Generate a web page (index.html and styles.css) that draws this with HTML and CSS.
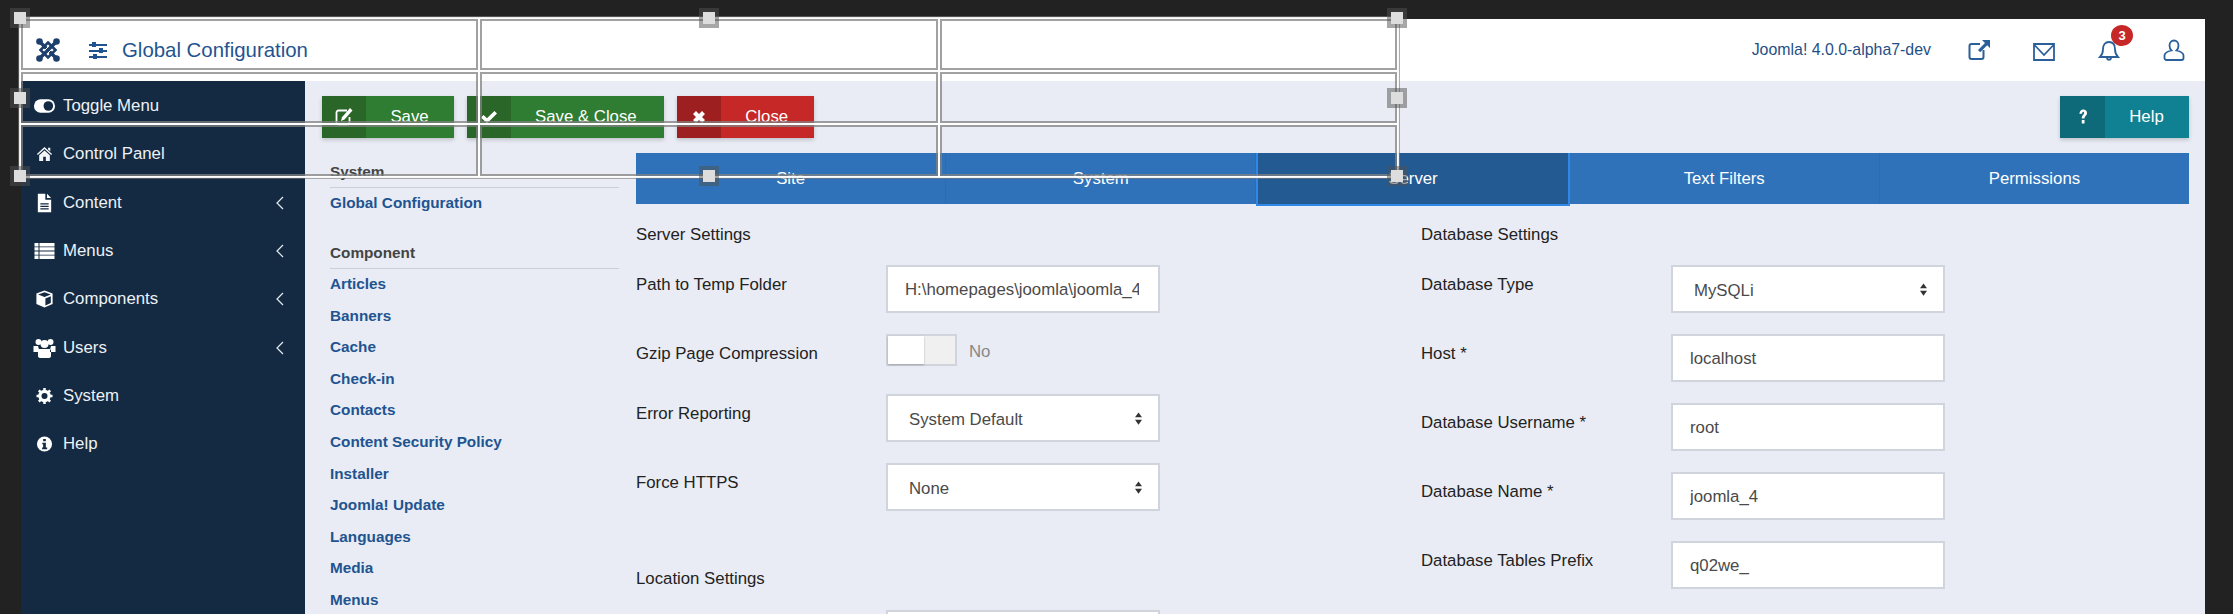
FILE: index.html
```html
<!DOCTYPE html>
<html lang="en">
<head>
<meta charset="utf-8">
<title>Global Configuration</title>
<link rel="stylesheet" href="styles.css">
</head>
<body>
<div class="app">
  <header class="topbar">
    <svg class="logo" viewBox="0 0 24 24"><g fill="none" stroke="#1c3f6c"><path d="M4 4L20 20M20 4L4 20" stroke-width="3.400"/><path d="M12 4.500L19.500 12 12 19.500 4.500 12z" stroke-width="2.600"/></g><path d="M9 12l3-3M12 15l3-3" stroke="#fff" stroke-width="1"/><g fill="#1c3f6c"><circle cx="3.500" cy="3.500" r="3.300"/><circle cx="20.500" cy="3.500" r="3.300"/><circle cx="3.500" cy="20.500" r="3.300"/><circle cx="20.500" cy="20.500" r="3.300"/></g></svg>
    <svg class="sliders" viewBox="0 0 18 17"><g stroke="#1f5490" stroke-width="2"><path d="M0 3h18M0 9h18M0 15h18"/></g><g fill="#1f5490"><rect x="3" y="0" width="4" height="5"/><rect x="10" y="6" width="4" height="5"/><rect x="4" y="12" width="4" height="5"/></g></svg>
    <h1 class="page-title">Global Configuration</h1>
    <span class="version">Joomla! 4.0.0-alpha7-dev</span>
    <svg class="top-icon" viewBox="0 0 22 22"><path d="M12 5H3.500A2 2 0 0 0 1.500 7v11a2 2 0 0 0 2 2h10a2 2 0 0 0 2-2v-7" fill="none" stroke="#2a5f9a" stroke-width="2"/><path d="M14 1h8v8l-2.800-2.800-7 7-2.200-2.200 7-7z" fill="#2a5f9a"/></svg>
    <svg class="top-icon" viewBox="0 0 22 22"><path d="M1 5h20v16H1zM1 5.500L11 16 21 5.500" fill="none" stroke="#2a5f9a" stroke-width="1.800"/></svg>
    <span class="bell">
      <svg class="top-icon" viewBox="0 0 22 22"><path d="M2 18c2-2 3-4 3-8 0-4 2-7 6-7s6 3 6 7c0 4 1 6 3 8zM9 18.500c0 3 4 3 4 0" fill="none" stroke="#2a5f9a" stroke-width="1.800"/></svg>
      <span class="badge">3</span>
    </span>
    <svg class="top-icon" viewBox="0 0 22 22"><path d="M6.500 6.500a4.500 5 0 1 1 9 0c0 2.500-1 4-2 5 4 1 7 2.500 7 5V19a2 2 0 0 1-2 2H3.500a2 2 0 0 1-2-2v-2.500c0-2.500 3-4 7-5-1-1-2-2.500-2-5z" fill="none" stroke="#2a5f9a" stroke-width="1.800"/></svg>
  </header>

  <div class="main">
    <nav class="sidebar">
      <a class="side-item"><svg class="side-icon" viewBox="0 0 24 16"><rect x="1" y="1" width="22" height="14" rx="7" fill="#fff"/><circle cx="16" cy="8" r="5" fill="#132a42"/></svg>Toggle Menu</a>
      <a class="side-item"><svg class="side-icon" viewBox="0 0 18 18"><path d="M9 1l8.500 8-1 1.200L9 3.500 1.500 10.200.500 9zM3 10.500L9 5l6 5.500V17h-4.500v-5h-3v5H3zM13 2h2.500v4L13 4z" fill="#f4f5f7"/></svg>Control Panel</a>
      <a class="side-item"><svg class="side-icon side-icon-tall" viewBox="0 0 18 24"><path d="M1 1h9v7h7v15H1zM12 1l5 5h-5z" fill="#fff"/><path d="M4 13h10M4 16h10M4 19h10" stroke="#132a42" stroke-width="1.500"/></svg>Content<svg class="chevron" viewBox="0 0 8 14"><path d="M7 1L1 7l6 6" fill="none" stroke="#e8ecf0" stroke-width="1.200"/></svg></a>
      <a class="side-item"><svg class="side-icon" viewBox="0 0 20 16"><path d="M0 0h20v3.400H0zM0 4.200h20v3.400H0zM0 8.400h20v3.400H0zM0 12.600h20V16H0z" fill="#fff"/><path d="M4.500 0v16" stroke="#132a42"/></svg>Menus<svg class="chevron" viewBox="0 0 8 14"><path d="M7 1L1 7l6 6" fill="none" stroke="#e8ecf0" stroke-width="1.200"/></svg></a>
      <a class="side-item"><svg class="side-icon side-icon-mid" viewBox="0 0 20 20"><path d="M10 .500l9 3.300v11.700L10 19.500 1 15.500V3.800z" fill="#fff"/><path d="M3 5l7 2.800L17 5l-7-2.600zM11 9.500v7.600l6-2.700V7z" fill="#132a42"/></svg>Components<svg class="chevron" viewBox="0 0 8 14"><path d="M7 1L1 7l6 6" fill="none" stroke="#e8ecf0" stroke-width="1.200"/></svg></a>
      <a class="side-item"><svg class="side-icon side-icon-tall" viewBox="0 0 22 20"><g fill="#fff"><circle cx="5" cy="4" r="3"/><circle cx="17" cy="4" r="3"/><circle cx="11" cy="6" r="4"/><path d="M0 8h4.500l1 3.500v2.500H0zM22 8h-4.500l-1 3.500v2.500H22zM6 11h10c1 0 1.500 1 1.500 2v5c0 1-1 2-2 2h-9c-1 0-2-1-2-2v-5c0-1 .5-2 1.500-2z"/></g></svg>Users<svg class="chevron" viewBox="0 0 8 14"><path d="M7 1L1 7l6 6" fill="none" stroke="#e8ecf0" stroke-width="1.200"/></svg></a>
      <a class="side-item"><svg class="side-icon" viewBox="0 0 18 18"><circle cx="9" cy="9" r="5.200" fill="none" stroke="#fff" stroke-width="3.600"/><path d="M9 0v18M0 9h18M2.600 2.600l12.800 12.800M15.400 2.600L2.600 15.400" stroke="#fff" stroke-width="2.800" stroke-dasharray="3 12 3"/></svg>System</a>
      <a class="side-item"><svg class="side-icon" viewBox="0 0 18 18"><circle cx="9" cy="9" r="8.500" fill="#fff"/><path d="M7.500 3.500h3v2.500h-3zM6.500 7.500h4V13H12v1.800H6.300V13h1.200V9.300h-1z" fill="#132a42"/></svg>Help</a>
    </nav>

    <div class="content">
      <div class="toolbar">
        <button class="btn btn-green"><span class="btn-icon"><svg viewBox="0 0 18 18"><path d="M12 2.500H3.500a2 2 0 0 0-2 2v10a2 2 0 0 0 2 2h9a2 2 0 0 0 2-2V9" fill="none" stroke="#fff" stroke-width="1.800"/><path d="M15 0l2.500 2.500-8 9L6 13l1-3.800z" fill="#fff"/></svg></span><span class="btn-label">Save</span></button>
        <button class="btn btn-green"><span class="btn-icon"><svg viewBox="0 0 18 18"><path d="M1 9.500l2.600-2.600 3.400 3.400L14.400 3 17 5.600 7 15.500z" fill="#fff"/></svg></span><span class="btn-label">Save &amp; Close</span></button>
        <button class="btn btn-red"><span class="btn-icon"><svg viewBox="0 0 18 18"><path d="M3 6l3-3 3 3 3-3 3 3-3 3 3 3-3 3-3-3-3 3-3-3 3-3z" fill="#fff"/></svg></span><span class="btn-label">Close</span></button>
        <button class="btn btn-teal"><span class="btn-icon"><svg viewBox="0 0 18 18"><path d="M5.500 6C5.500 3 7 1.500 9.300 1.500c2.300 0 3.700 1.500 3.700 3.500 0 2.800-2.500 3-2.500 5.500H7.800c0-3.500 2.300-3.700 2.300-5.500 0-.8-.3-1.200-.9-1.200-.7 0-1 .6-1 1.800zM7.800 12h2.700v3.500H7.800z" fill="#fff"/></svg></span><span class="btn-label">Help</span></button>
      </div>

      <div class="body-row">
        <aside class="subnav">
          <h3 class="sub-head">System</h3>
          <ul class="sub-list sub-list-first">
            <li>Global Configuration</li>
          </ul>
          <h3 class="sub-head sub-head-next">Component</h3>
          <ul class="sub-list sub-list-second">
            <li>Articles</li>
            <li>Banners</li>
            <li>Cache</li>
            <li>Check-in</li>
            <li>Contacts</li>
            <li>Content Security Policy</li>
            <li>Installer</li>
            <li>Joomla! Update</li>
            <li>Languages</li>
            <li>Media</li>
            <li>Menus</li>
          </ul>
        </aside>

        <section class="panel">
          <div class="tabs">
            <div class="tab">Site</div>
            <div class="tab">System</div>
            <div class="tab tab-active">Server</div>
            <div class="tab">Text Filters</div>
            <div class="tab">Permissions</div>
          </div>
          <div class="columns">
            <div class="col">
              <h4 class="section-title">Server Settings</h4>
              <div class="field"><label>Path to Temp Folder</label><input class="input" value="H:\homepages\joomla\joomla_4\tmp"></div>
              <div class="field field-switch"><label>Gzip Page Compression</label><div class="switch"><span class="switch-track"><span class="switch-knob"></span></span><span class="switch-text">No</span></div></div>
              <div class="field"><label>Error Reporting</label><div class="select-wrap"><select class="input select"><option>System Default</option></select><svg class="arrows" viewBox="0 0 8 14"><path d="M4 0l4 5.500H0zM4 14l4-5.500H0z"/></svg></div></div>
              <div class="field"><label>Force HTTPS</label><div class="select-wrap"><select class="input select"><option>None</option></select><svg class="arrows" viewBox="0 0 8 14"><path d="M4 0l4 5.500H0zM4 14l4-5.500H0z"/></svg></div></div>
              <h4 class="section-title section-next">Location Settings</h4>
              <div class="field"><label></label><input class="input" value=""></div>
            </div>
            <div class="col">
              <h4 class="section-title">Database Settings</h4>
              <div class="field"><label>Database Type</label><div class="select-wrap"><select class="input select"><option>MySQLi</option></select><svg class="arrows" viewBox="0 0 8 14"><path d="M4 0l4 5.500H0zM4 14l4-5.500H0z"/></svg></div></div>
              <div class="field"><label>Host *</label><input class="input" value="localhost"></div>
              <div class="field"><label>Database Username *</label><input class="input" value="root"></div>
              <div class="field"><label>Database Name *</label><input class="input" value="joomla_4"></div>
              <div class="field"><label>Database Tables Prefix</label><input class="input" value="q02we_"></div>
            </div>
          </div>
        </section>
      </div>
    </div>
  </div>
</div>

<div class="selection">
  <div class="sel-cell"></div><div class="sel-cell"></div><div class="sel-cell"></div>
  <div class="sel-cell"></div><div class="sel-cell"></div><div class="sel-cell"></div>
  <div class="sel-cell"></div><div class="sel-cell"></div><div class="sel-cell"></div>
  <span class="handle h-tl"></span><span class="handle h-tc"></span><span class="handle h-tr"></span>
  <span class="handle h-ml"></span><span class="handle h-mr"></span>
  <span class="handle h-bl"></span><span class="handle h-bc"></span><span class="handle h-br"></span>
</div>
</body>
</html>
```

FILE: styles.css
```css
* { box-sizing: border-box; }
html, body { height: 100%; margin: 0; overflow: hidden; }
body {
  background: #222;
  padding: 19px 28px 0 21px;
  position: relative;
  font-family: "Liberation Sans", Arial, sans-serif;
  font-size: 16.8px;
  color: #222;
}
.app { height: 595px; overflow: hidden; display: flex; flex-direction: column; }

/* top bar */
.topbar { height: 62px; flex: none; background: #fff; display: flex; align-items: center; padding-right: 20px; }
.logo { width: 24px; height: 24px; margin-left: 15px; flex: none; }
.sliders { width: 18px; height: 17px; margin-left: 29px; flex: none; }
.page-title { margin: 0 0 0 15px; font-size: 20.4px; font-weight: 400; color: #1f5490; }
.version { margin-left: auto; font-size: 15.9px; color: #1f4f85; }
.top-icon { width: 22px; height: 22px; display: block; flex: none; }
.topbar > .top-icon, .bell { margin-left: 43px; }
.topbar > .version + .top-icon { margin-left: 37px; }
.bell { position: relative; flex: none; }
.badge { position: absolute; left: 13px; top: -14px; width: 22px; height: 21px; border-radius: 50%; background: #c52827; color: #fff; font-size: 13px; font-weight: 700; text-align: center; line-height: 21px; }

.main { flex: 1; display: flex; min-height: 0; }

/* sidebar */
.sidebar { width: 284px; flex: none; background: #132a42; padding-top: 1px; }
.side-item { height: 48.3px; display: flex; align-items: center; padding-left: 12px; padding-right: 21px; color: #eef1f5; }
.side-icon { width: 23px; height: 16px; flex: none; margin-right: 7px; }
.side-icon-mid { height: 18px; }
.side-icon-tall { height: 20px; }
.chevron { width: 8px; height: 14px; margin-left: auto; }

/* content */
.content { flex: 1; background: #e9ecf4; min-width: 0; }
.toolbar { display: flex; gap: 13px; padding: 15px 16px 15px 17px; }
.btn { height: 42px; padding: 0; border: 0; display: flex; color: #fff; font: inherit; box-shadow: 0 2px 4px rgba(0,0,0,.18); }
.btn-icon { width: 44px; display: flex; align-items: center; justify-content: center; }
.btn-icon svg { width: 18px; height: 18px; }
.btn-label { flex: 1; line-height: 42px; text-align: center; padding: 0 25px 0 24px; min-width: 88px; }
.btn-green { background: #2f7d32; }
.btn-green .btn-icon { background: #2a6628; }
.btn-green + .btn-green .btn-label { padding-right: 27px; }
.btn-red { background: #c52827; }
.btn-red .btn-icon { background: #9e1f1f; }
.btn-red .btn-label { min-width: 93px; }
.btn-teal { background: #108193; margin-left: auto; }
.btn-teal .btn-icon { background: #0e6a79; width: 45px; }
.btn-teal .btn-label { min-width: 84px; }

.body-row { display: flex; padding: 0 16px 0 25px; gap: 17px; }

/* sub navigation */
.subnav { width: 289px; flex: none; font-size: 15.3px; font-weight: 700; }
.sub-head { margin: 0; height: 35px; padding-top: 10px; line-height: 18px; font-size: 15.3px; color: #444; border-bottom: 1px solid #c9ced9; }
.sub-head-next { margin-top: 16px; }
.sub-list { list-style: none; margin: 0; padding: 0; color: #1f5490; }
.sub-list-first { margin-top: -1.5px; }
.sub-list-second { margin-top: -1px; }
.sub-list li { height: 31.6px; line-height: 31.6px; }

/* panel */
.panel { flex: 1; min-width: 0; }
.tabs { display: flex; height: 51px; background: #2f72b9; color: #fff; }
.tab { flex: 1; line-height: 51px; text-align: center; border-right: 1px solid #2e6cae; }
.tab:last-child { border-right: 0; }
.tab-active { height: 53px; background: #245a92; border: 2px solid #2f87e8; border-width: 0 2px 2px; }
.columns { display: grid; grid-template-columns: 785px 1fr; }
.section-title { margin: 0 0 20px; padding-top: 21px; font-size: 16.8px; font-weight: 400; line-height: 20px; }
.section-next { margin-top: 58px; padding-top: 0; margin-bottom: 21px; }
.field { display: grid; grid-template-columns: 250px 273.500px; margin-bottom: 21px; }
.field label { padding-top: 10px; line-height: 20px; }
.field-switch { height: 39px; }
.input { display: block; width: 100%; height: 48px; border: 2px solid #d0d4dd; background: #fff; padding: 2px 19px 0 17px; font: inherit; color: #4a4a4a; border-radius: 0; outline: 0; }
.select { appearance: none; -webkit-appearance: none; padding-left: 21px; }
.select-wrap { position: relative; }
.arrows { position: absolute; right: 18px; top: 18px; width: 7px; height: 13px; fill: #333; }

/* switch */
.switch { display: flex; gap: 12px; }
.switch-track { width: 71px; height: 32px; border: 2px solid #d0d4dd; background: #f0f0f0; display: block; }
.switch-knob { display: block; width: 36px; height: 28px; background: #fff; box-shadow: 0 1px 2px rgba(0,0,0,.25); }
.switch-text { color: #888; line-height: 36px; }

/* selection overlay */
.selection {
  position: absolute; left: 21px; top: 19px; width: 1376px; height: 157px;
  display: grid; grid-template-columns: 457px 458px 457px; grid-template-rows: 51px 51px 51px; gap: 2px;
  box-shadow: 0 0 0 2px rgba(255,255,255,.9), 0 0 0 3px rgba(120,120,120,.6);
}
.sel-cell { border: 2px solid rgba(130,130,130,.75); box-shadow: 0 0 0 1px #fff; }
.handle { position: absolute; width: 12px; height: 12px; background: #ddd; box-shadow: 0 0 0 4px rgba(80,80,80,.5); transform: translate(-50%, -50%); }
.h-tl, .h-tc, .h-tr { top: -1px; }
.h-ml, .h-mr { top: 50%; }
.h-bl, .h-bc, .h-br { top: 100%; }
.h-tl, .h-ml, .h-bl { left: -1px; }
.h-tc, .h-bc { left: 50%; }
.h-tr, .h-mr, .h-br { left: 100%; }
```
